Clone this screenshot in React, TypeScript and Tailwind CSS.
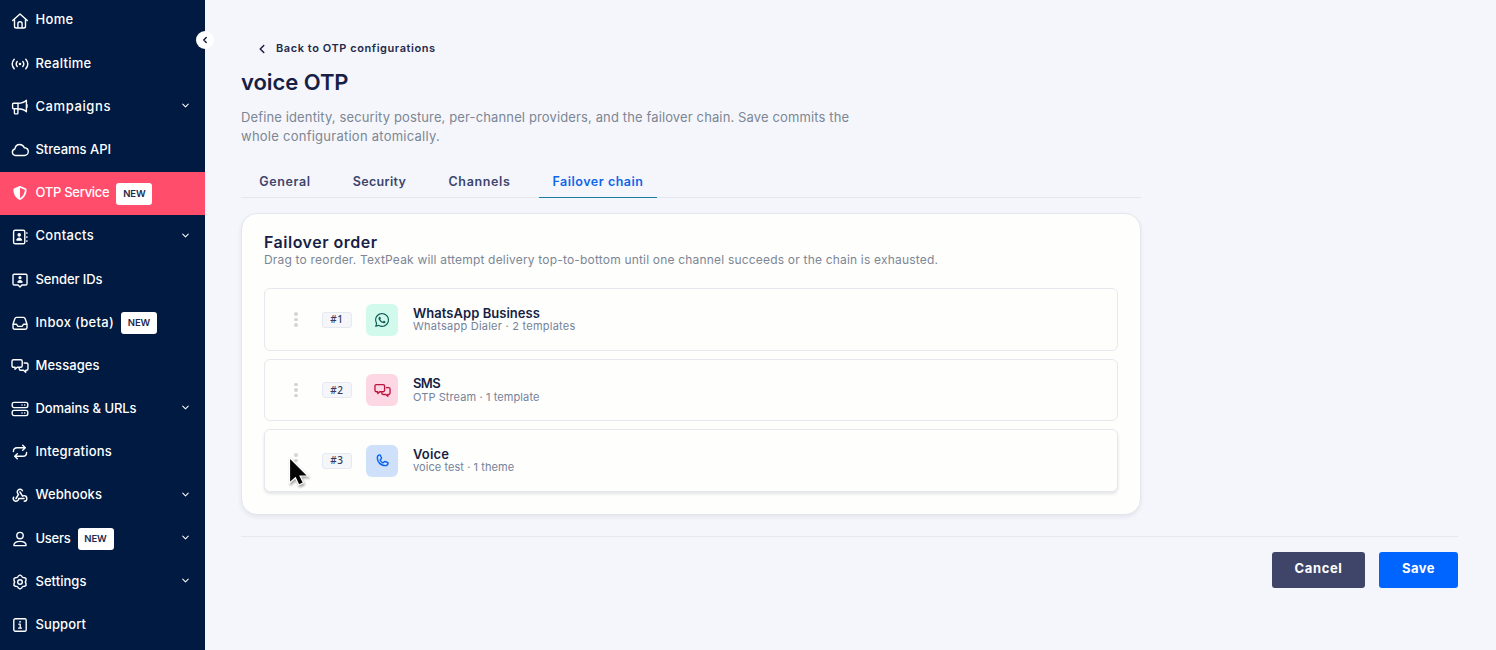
import type { ReactNode } from "react";
import { FaShieldHalved, FaWhatsapp } from "react-icons/fa6";
import { PiWebhooksLogoBold, PiPhoneBold } from "react-icons/pi";
import { ChevronDown, ChevronLeft } from "lucide-react";

function Line({ children, size = "size-[18px]" }: { children: ReactNode; size?: string }) {
  return (
    <svg
      className={size}
      viewBox="0 0 18 18"
      fill="none"
      stroke="currentColor"
      strokeWidth="1.4"
      strokeLinecap="round"
      strokeLinejoin="round"
    >
      {children}
    </svg>
  );
}

const HomeIcon = () => (
  <Line>
    <path d="M1.7 8.6 9 2.1l7.3 6.5M3.5 7.4v6.8a1.8 1.8 0 0 0 1.8 1.8h7.4a1.8 1.8 0 0 0 1.8-1.8V7.4M6.9 15.8v-4a2.1 2.1 0 0 1 4.2 0v4" />
  </Line>
);
const SignalIcon = () => (
  <Line>
    <circle cx="9" cy="9" r=".6" fill="currentColor" />
    <path d="M6.2 6.5c-1.2 1.5-1.2 3.500 0 5M11.8 6.500c1.200 1.500 1.200 3.500 0 5M3.200 4.300c-2.400 2.800-2.400 6.600 0 9.400M14.800 4.300c2.400 2.800 2.400 6.600 0 9.400" />
  </Line>
);
const MegaphoneIcon = () => (
  <Line>
    <path d="M7 5.2H2.600a1 1 0 0 0-1 1v3.600a1 1 0 0 0 1 1H7zM7 5.200c3.500 0 6.300-1 8.400-3v11.600c-2.100-2-4.900-3-8.400-3M3.400 10.800v4.300c0 .5.3.8.8.8h1.900c.5 0 .8-.3.8-.8v-4.300M16 6.800v2.400" />
  </Line>
);
const CloudIcon = () => (
  <Line>
    <path d="M4.500 14.500a3.300 3.300 0 0 1-.6-6.500C4.300 5.400 6.100 3.500 8.600 3.500c2.100 0 3.900 1.200 4.700 3.200 2.300.2 4 1.800 4 3.900s-1.700 3.900-4 3.900z" />
  </Line>
);
const ContactsIcon = () => (
  <Line>
    <rect x="2.6" y="2.2" width="11.2" height="13.6" rx="1.6" />
    <circle cx="8.2" cy="6.9" r="1.1" fill="currentColor" />
    <path d="M5.7 11.9c.2-2.6 4.8-2.6 5 0z" fill="currentColor" strokeWidth="1" />
    <path d="M15.9 4.5v1M15.9 8.5v1M15.9 12.5v1" strokeWidth="1.2" />
  </Line>
);
const SenderIcon = () => (
  <Line>
    <path d="M3.3 3.2h11.4c.8 0 1.3.5 1.3 1.3v8.2c0 .8-.5 1.3-1.3 1.3H11l-2 2-2-2H3.3C2.5 14 2 13.5 2 12.7V4.5c0-.8.5-1.3 1.3-1.3z" />
    <circle cx="9" cy="6.7" r=".9" fill="currentColor" />
    <path d="M6.8 11c.2-2.3 4.2-2.3 4.4 0z" fill="currentColor" strokeWidth="1" />
  </Line>
);
const InboxIcon = () => (
  <Line>
    <path d="M2 10.3 3.8 4.7c.3-.9.9-1.3 1.8-1.3h6.8c.9 0 1.5.4 1.8 1.3L16 10.3v3.2c0 1-.7 1.7-1.7 1.7H3.7c-1 0-1.7-.7-1.7-1.7zM2 10.3h3.3c.8 0 .9 2.1 2 2.1h3.4c1.1 0 1.2-2.1 2-2.1H16" />
  </Line>
);
const ChatsIcon = ({ size }: { size?: string }) => (
  <Line size={size}>
    <path d="M2.500 2.700h7.200c.900 0 1.500.6 1.500 1.500v4.600c0 .9-.6 1.500-1.500 1.500H6.200L4 12.300v-2H2.500C1.600 10.300 1 9.700 1 8.800V4.200c0-.9.6-1.500 1.500-1.500z" />
    <path d="M13.200 6h2.300c.9 0 1.500.6 1.500 1.500v4.200c0 .9-.6 1.500-1.500 1.500h-.8v2l-2.200-2H9.700c-.9 0-1.500-.6-1.500-1.500v-.5" />
  </Line>
);
const ServersIcon = () => (
  <Line>
    <rect x="1.2" y="2.4" width="15.600" height="5.200" rx="1.8" />
    <rect x="1.2" y="10.400" width="15.600" height="5.200" rx="1.800" />
    <path d="M11 5h.1M13.700 5h.1M11 13h.1M13.700 13h.1" />
  </Line>
);
const RepeatIcon = () => (
  <Line>
    <path d="M2.400 8.600c0-2.500 1.500-3.800 3.800-3.800h7.800M11.700 2.300l2.600 2.500-2.600 2.500M15.600 9.400c0 2.500-1.500 3.800-3.800 3.800H4M6.300 10.700l-2.600 2.500 2.600 2.500" />
  </Line>
);
const UserIcon = () => (
  <Line>
    <circle cx="9" cy="5.600" r="3.200" />
    <path d="M2.900 15.600c0-2.800 2.200-4.200 6.100-4.200s6.100 1.400 6.100 4.200z" />
  </Line>
);
const GearIcon = () => (
  <Line>
    <circle cx="9" cy="9" r="2.300" />
    <path d="M7.300 3 9 2l1.700 1 .5 1 1.100.6 1.200 0 1.500 1v2l-.6 1v.8l.6 1v2l-1.500 1h-1.200l-1.100.6-.5 1L9 16l-1.700-1-.5-1-1.100-.6H4.500l-1.500-1v-2l.6-1v-.8l-.6-1v-2l1.500-1h1.200L6.800 4z" />
  </Line>
);
const InfoIcon = () => (
  <Line>
    <rect x="2.8" y="2.8" width="12.4" height="12.4" rx="1.5" />
    <path d="M7.800 8.200H9.200v4M7.600 12.200h2.900" strokeWidth="1.3" />
    <path d="M9 5.800h.1" strokeWidth="1.700" />
  </Line>
);

type NavItem = { label: string; spacing: string; icon: ReactNode; badge?: boolean; menu?: boolean; active?: boolean };

const nav: NavItem[] = [
  { label: "Home", spacing: "tracking-[0.32px]", icon: <HomeIcon /> },
  { label: "Realtime", spacing: "tracking-[0.28px]", icon: <SignalIcon /> },
  { label: "Campaigns", spacing: "tracking-[0.59px]", icon: <MegaphoneIcon />, menu: true },
  { label: "Streams API", spacing: "tracking-[-0.03px]", icon: <CloudIcon /> },
  { label: "OTP Service", spacing: "tracking-[-0.28px]", icon: <FaShieldHalved className="size-[14px]" />, badge: true, active: true },
  { label: "Contacts", spacing: "tracking-[0.32px]", icon: <ContactsIcon />, menu: true },
  { label: "Sender IDs", spacing: "tracking-[-0.1px]", icon: <SenderIcon /> },
  { label: "Inbox (beta)", spacing: "tracking-[0.3px]", icon: <InboxIcon />, badge: true },
  { label: "Messages", spacing: "tracking-[0.05px]", icon: <ChatsIcon /> },
  { label: "Domains & URLs", spacing: "tracking-[-0.08px]", icon: <ServersIcon />, menu: true },
  { label: "Integrations", spacing: "tracking-[0.2px]", icon: <RepeatIcon /> },
  { label: "Webhooks", spacing: "tracking-[0.08px]", icon: <PiWebhooksLogoBold className="size-4" />, menu: true },
  { label: "Users", spacing: "tracking-[-0.26px]", icon: <UserIcon />, badge: true, menu: true },
  { label: "Settings", spacing: "tracking-[0.04px]", icon: <GearIcon />, menu: true },
  { label: "Support", spacing: "tracking-[0.1px]", icon: <InfoIcon /> },
];

const tabs = [
  { label: "General", spacing: "tracking-[0.63px]", width: "w-[88px]" },
  { label: "Security", spacing: "tracking-[0.33px]", width: "w-[101px]" },
  { label: "Channels", spacing: "tracking-[0.64px]", width: "w-[99px]" },
];

const channels = [
  {
    rank: "#1",
    name: "WhatsApp Business",
    nameSpacing: "tracking-[0.04px]",
    detail: "Whatsapp Dialer · 2 templates",
    detailSpacing: "tracking-[0.24px]",
    tile: "bg-[#d1faec] text-[#0c5c56]",
    icon: <FaWhatsapp className="size-4" />,
    lifted: false,
  },
  {
    rank: "#2",
    name: "SMS",
    nameSpacing: "tracking-[-0.64px]",
    detail: "OTP Stream · 1 template",
    detailSpacing: "tracking-[0.1px]",
    tile: "bg-[#fdd8e4] text-[#be123c]",
    icon: <ChatsIcon size="size-[17px]" />,
    lifted: false,
  },
  {
    rank: "#3",
    name: "Voice",
    nameSpacing: "tracking-[0.14px]",
    detail: "voice test · 1 theme",
    detailSpacing: "tracking-[0.07px]",
    tile: "bg-[#cfe1fa] text-[#0a62f0]",
    icon: <PiPhoneBold className="size-[15px]" />,
    lifted: true,
  },
];

function Sidebar() {
  return (
    <aside className="relative w-[205px] shrink-0 bg-[#001a41] text-white">
      <nav className="-mt-px flex flex-col">
        {nav.map((item) => (
          <a
            key={item.label}
            className={`flex h-[43.2px] items-center pl-[10.5px] pr-[14px] ${item.active ? "bg-[#ff4d6b]" : ""}`}
          >
            <span className="flex w-[18px] shrink-0 justify-center">{item.icon}</span>
            <span className={`ml-[7px] -mt-[2.4px] text-[13px] font-medium leading-5 whitespace-nowrap ${item.spacing}`}>
              {item.label}
            </span>
            {item.badge && (
              <span className="ml-[7px] mt-px flex h-[22px] w-9 items-center justify-center rounded-[3px] bg-white text-[9.5px] font-semibold tracking-[-0.1px] text-[#1b2a4e]">
                NEW
              </span>
            )}
            {item.menu && <ChevronDown className="ml-auto -mt-[3px] size-[11px]" strokeWidth={2.2} />}
          </a>
        ))}
      </nav>
      <button className="absolute top-[31px] left-[196px] flex size-[18px] items-center justify-center rounded-full bg-white text-[#111c3a]">
        <ChevronLeft className="size-[10px]" strokeWidth={3.4} />
      </button>
    </aside>
  );
}

export default function App() {
  return (
    <div className="relative flex h-[650px] w-full overflow-hidden bg-[#f5f6fb] font-['Inter',sans-serif] text-[#171f45]">
      <Sidebar />
      <main className="flex-1 pl-9 pr-[38px] pt-10">
        <a className="flex h-4 items-center pl-3.5">
          <ChevronLeft className="mt-0.5 size-3.5" strokeWidth={2.6} />
          <span className="ml-[7px] text-[11px] font-semibold leading-4 tracking-[0.56px] text-[#1f2a4c]">
            Back to OTP configurations
          </span>
        </a>
        <h1 className="mt-[10px] h-8 text-[22px] font-semibold leading-8 tracking-[-0.05px]">voice OTP</h1>
        <p className="mt-[10px] text-[13px] leading-[19px] text-[#7c8694]">
          <span className="block tracking-[0.13px]">
            Define identity, security posture, per-channel providers, and the failover chain. Save commits the
          </span>
          <span className="block tracking-[0.25px]">whole configuration atomically.</span>
        </p>
        <div className="mt-[19px] flex h-[33px] w-[900px] border-b border-[#e4e7ed] text-[12.5px] font-semibold leading-5 text-[#3d456b]">
          {tabs.map((tab) => (
            <a key={tab.label} className={`pt-[7px] text-center ${tab.width} ${tab.spacing}`}>
              {tab.label}
            </a>
          ))}
          <a className="ml-[10px] h-[33px] w-[118px] border-b border-[#1a7f9c] pt-[7px] text-center tracking-[0.51px] text-[#0d67e8]">
            Failover chain
          </a>
        </div>

        <section className="mt-[15px] h-[302px] w-[900px] rounded-2xl border border-[#e3e6ec] bg-[#fefefd] px-[22px] pt-[18px] shadow-[0_2px_4px_rgba(30,41,80,0.08)]">
          <h2 className="text-base font-semibold leading-[21px] tracking-[0.5px]">Failover order</h2>
          <p className="-mt-px text-xs leading-[15px] tracking-[0.19px] text-[#7c8694]">
            Drag to reorder. TextPeak will attempt delivery top-to-bottom until one channel succeeds or the chain is
            exhausted.
          </p>
          <div className="mt-[21px] flex flex-col gap-2">
            {channels.map((channel) => (
              <div
                key={channel.rank}
                className={`flex h-[62.5px] items-center rounded-md border border-[#e6e8ed] bg-[#fefefd] pl-[29px] ${channel.lifted ? "shadow-[0_2px_3px_rgba(30,41,60,0.12)]" : ""}`}
              >
                <span className="flex flex-col gap-[2px]">
                  <span className="size-[3.5px] rounded-full bg-[#d3d4d6]" />
                  <span className="size-[3.5px] rounded-full bg-[#d3d4d6]" />
                  <span className="size-[3.5px] rounded-full bg-[#d3d4d6]" />
                </span>
                <span className="mt-px ml-[24.5px] flex h-4 w-[30px] items-center justify-center rounded-[3px] border border-[#e6e9f0] bg-[#f4f6fa] font-['Noto_Sans',sans-serif] text-[10px] font-medium tracking-[0.6px] text-[#333b5e]">
                  {channel.rank}
                </span>
                <span className={`mt-px ml-3.5 flex size-8 items-center justify-center rounded-md ${channel.tile}`}>
                  {channel.icon}
                </span>
                <span className="ml-[15px] flex flex-col">
                  <span className={`text-[13px] font-semibold leading-[15px] ${channel.nameSpacing}`}>
                    {channel.name}
                  </span>
                  <span className={`-mt-[0.5px] text-[11px] leading-[13px] text-[#76829a] ${channel.detailSpacing}`}>
                    {channel.detail}
                  </span>
                </span>
              </div>
            ))}
          </div>
        </section>

        <footer className="mt-[21px] flex justify-end gap-3.5 border-t border-[#e6e8ee] pt-[15px] text-[13px] font-bold text-white">
          <button className="h-9 w-[93px] rounded-[3px] bg-[#3e4569] pb-[3px] tracking-[0.6px]">Cancel</button>
          <button className="h-9 w-[79px] rounded-[3px] bg-[#0065ff] pb-[3px] tracking-[0.5px]">Save</button>
        </footer>
      </main>

      <svg className="absolute top-[455px] left-[287px] h-[34px] w-6 drop-shadow-[1px_2px_1px_rgba(0,0,0,0.35)]" viewBox="0 0 24 34">
        <path
          d="M2.5 2.5v25.5l5.900-5.200 3.400 7.200 4.600-2.200-3.300-6.800h7.900z"
          fill="#050505"
          stroke="#fff"
          strokeWidth="1.2"
        />
      </svg>
    </div>
  );
}
